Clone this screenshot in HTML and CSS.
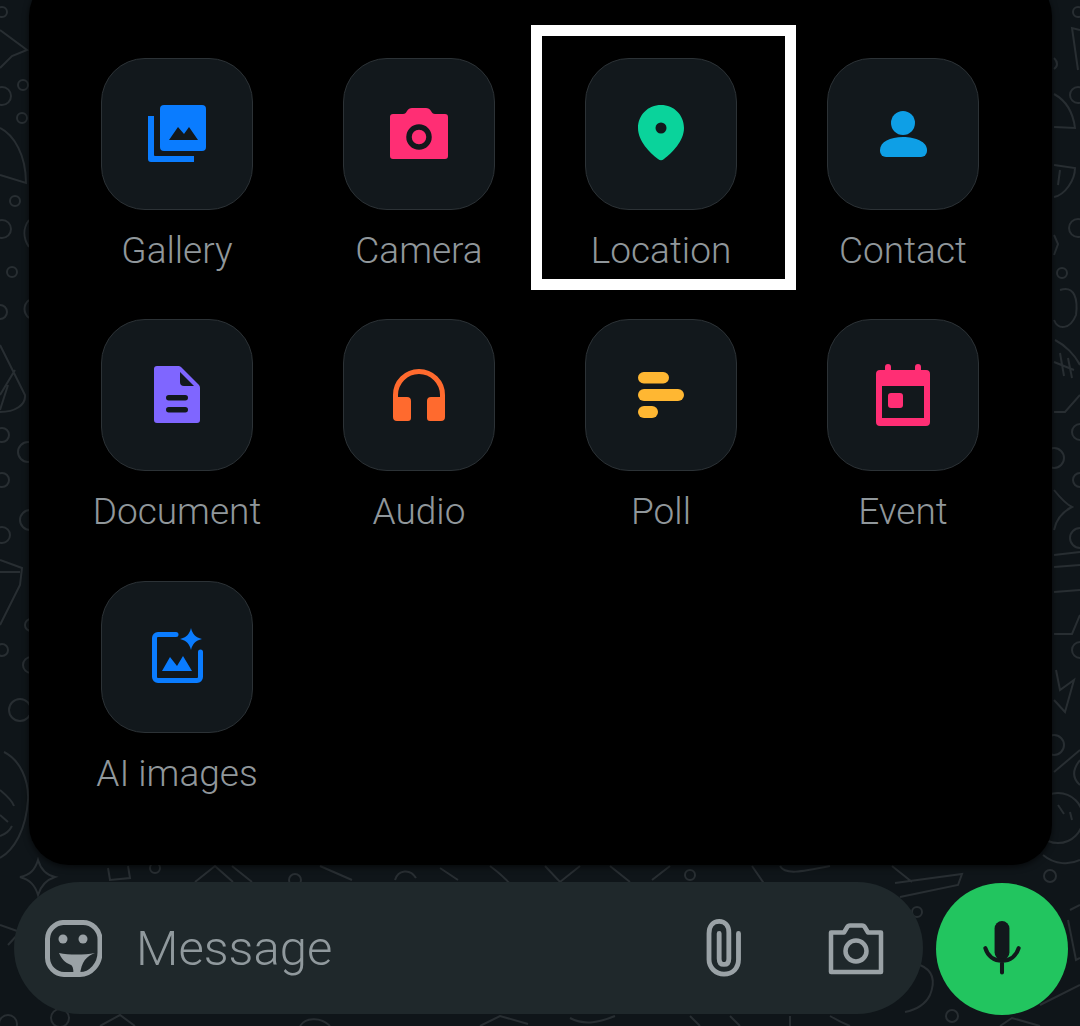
FILE: index.html
```html
<!DOCTYPE html>
<html lang="en">
<head>
  <meta charset="UTF-8">
  <title>Attach menu</title>
  <link rel="stylesheet" href="styles.css">
</head>
<body>
  <!-- wallpaper doodles -->
  <svg class="doodles" viewBox="0 0 1080 1026" width="1080" height="1026" fill="none" stroke="#282e32" stroke-width="2">
    <!-- left strip -->
    <circle cx="2" cy="12" r="5"/>
    <path d="M0 30L27 50 12 56 0 68"/>
    <circle cx="23" cy="85" r="5"/>
    <circle cx="2" cy="96" r="9"/>
    <circle cx="22" cy="118" r="5"/>
    <path d="M0 128C14 135 26 155 26 183L0 175"/>
    <circle cx="15" cy="201" r="5"/>
    <circle cx="2" cy="229" r="9"/>
    <path d="M29 220C23 228 23 238 29 247"/>
    <circle cx="12" cy="272" r="5"/>
    <circle cx="0" cy="312" r="7"/>
    <path d="M29 300C23 305 23 313 29 318"/>
    <path d="M0 345L25 395C26 405 15 412 0 412M0 395L15 370M0 410L8 385"/>
    <circle cx="2" cy="435" r="7"/>
    <circle cx="28" cy="452" r="10"/>
    <circle cx="2" cy="480" r="7"/>
    <circle cx="30" cy="520" r="10"/>
    <circle cx="2" cy="535" r="8"/>
    <path d="M0 560L22 568 20 585 0 625M0 572H20"/>
    <circle cx="31" cy="625" r="6"/>
    <circle cx="2" cy="650" r="6"/>
    <circle cx="31" cy="665" r="8"/>
    <circle cx="20" cy="710" r="11"/>
    <path d="M4 752C20 760 29 780 28 800 26 830 14 850 0 858"/>
    <path d="M0 790C6 795 12 800 14 806M0 815L8 822M0 836C6 834 10 830 12 826"/>
    <!-- band above the input -->
    <path d="M38 860C41 870 46 875 55 877 46 880 41 885 38 895 35 885 30 880 20 877 30 875 35 870 38 860Z"/>
    <path d="M108 868L110 880 130 878 128 866"/>
    <circle cx="155" cy="868" r="5"/>
    <path d="M195 882L215 866 233 882M232 866L252 882"/>
    <circle cx="295" cy="880" r="6"/>
    <path d="M320 866L352 880"/>
    <path d="M395 880C398 870 410 868 416 878M440 868L458 880"/>
    <path d="M490 866C498 872 505 878 510 884M545 866L560 882 580 866"/>
    <path d="M610 866L630 882M652 880L670 866"/>
    <circle cx="690" cy="875" r="5"/>
    <path d="M752 866L765 885M780 866C785 875 800 872 830 866"/>
    <path d="M892 866L912 882M895 883L962 874 958 885 900 897"/>
    <circle cx="1050" cy="876" r="6"/>
    <circle cx="917" cy="912" r="5"/>
    <path d="M920 965C932 970 936 980 930 995 925 1005 915 1010 905 1012"/>
    <!-- under the input -->
    <path d="M0 925L20 932 8 945"/>
    <circle cx="60" cy="1018" r="9"/>
    <circle cx="8" cy="1024" r="9"/>
    <path d="M100 1026L120 1015 135 1026M300 1026C305 1018 320 1016 330 1026M480 1026L500 1016 528 1024"/>
    <path d="M570 1018C585 1026 600 1022 615 1016M690 1016L700 1026M730 1016L740 1026M790 1016V1026M830 1016C840 1022 845 1024 850 1026"/>
    <circle cx="952" cy="1016" r="6"/>
    <path d="M1000 1026L1012 1018 1040 1026"/>
    <path d="M1070 910L1080 905M1068 920L1076 960 1080 958M1040 1005L1080 985"/>
    <!-- right strip -->
    <circle cx="1078" cy="12" r="5"/>
    <path d="M1080 30L1072 28 1078 70"/>
    <path d="M1054 58C1058 62 1058 66 1054 69"/>
    <circle cx="1078" cy="95" r="8"/>
    <path d="M1054 94C1065 100 1073 112 1075 128L1054 127"/>
    <path d="M1054 165L1075 168C1075 180 1065 195 1054 197M1060 170L1058 185"/>
    <circle cx="1078" cy="228" r="9"/>
    <path d="M1054 235L1058 244 1054 255"/>
    <circle cx="1062" cy="273" r="5"/>
    <path d="M1060 290C1075 285 1078 300 1076 315 1070 330 1058 330 1054 320"/>
    <path d="M1055 340C1065 345 1075 355 1080 365M1054 362L1074 370M1060 353L1064 376M1068 358L1072 378"/>
    <path d="M1080 395L1065 412H1054"/>
    <circle cx="1080" cy="432" r="8"/>
    <circle cx="1054" cy="458" r="10"/>
    <circle cx="1080" cy="480" r="7"/>
    <path d="M1054 490C1062 500 1068 505 1072 507 1062 512 1056 520 1054 530"/>
    <circle cx="1080" cy="538" r="10"/>
    <path d="M1054 555L1080 552M1054 567L1080 565M1054 592L1080 590"/>
    <path d="M1054 634H1072L1080 615"/>
    <circle cx="1080" cy="650" r="8"/>
    <path d="M1056 670L1060 690 1074 680 1065 712 1054 700"/>
    <circle cx="1054" cy="745" r="10"/>
    <path d="M1054 772L1080 750M1080 760C1072 770 1072 778 1080 785"/>
    <circle cx="1058" cy="818" r="25"/>
    <path d="M1058 805L1064 814M1070 812L1072 820"/>
    <path d="M1043 855C1055 865 1070 865 1080 860"/>
  </svg>

  <section class="panel">
    <div class="grid">
      <div class="item">
        <div class="tile">
          <svg class="ico" viewBox="0 0 60 60">
            <path fill="#0a7cff" d="M1 12h6v39a1 1 0 0 0 1 1h39v6H4a3 3 0 0 1-3-3z"/>
            <rect x="13" y="1" width="46" height="46" rx="4" fill="#0a7cff"/>
            <path fill="#12181c" d="M22 36l9-13 6 7 5-7 9 13z"/>
          </svg>
        </div>
        <span class="label">Gallery</span>
      </div>
      <div class="item">
        <div class="tile">
          <svg class="ico" viewBox="0 0 60 60">
            <path fill="#ff2e74" d="M4 10h10c2 0 3-1 4-3s3-3 5-3h14c2 0 4 1 5 3s2 3 4 3h10a3 3 0 0 1 3 3v39a3 3 0 0 1-3 3H4a3 3 0 0 1-3-3V13a3 3 0 0 1 3-3z"/>
            <circle cx="30" cy="33" r="10" fill="#ff2e74" stroke="#12181c" stroke-width="5.500"/>
          </svg>
        </div>
        <span class="label">Camera</span>
      </div>
      <div class="item item-marked">
        <div class="tile">
          <svg class="ico" viewBox="0 0 60 60">
            <path fill="#0ad39b" d="M30 1c13 0 23 10 23 23 0 13-12 25-20 31a4.500 4.500 0 0 1-6 0C19 49 7 37 7 24 7 11 17 1 30 1z"/>
            <circle cx="30" cy="24" r="5.500" fill="#12181c"/>
          </svg>
        </div>
        <span class="label">Location</span>
      </div>
      <div class="item">
        <div class="tile">
          <svg class="ico" viewBox="0 0 60 60">
            <circle cx="30" cy="19" r="12" fill="#0e9fe6"/>
            <path fill="#0e9fe6" d="M13 53a6 6 0 0 1-6-6v-1c0-8 10-13 23-13s24 5 24 13v1a6 6 0 0 1-6 6z"/>
          </svg>
        </div>
        <span class="label">Contact</span>
      </div>

      <div class="item">
        <div class="tile">
          <svg class="ico" viewBox="0 0 60 60">
            <path fill="#7f66ff" d="M10 1h21a4 4 0 0 1 3 1l18 18a4 4 0 0 1 1 3v32a3 3 0 0 1-3 3H10a3 3 0 0 1-3-3V4a3 3 0 0 1 3-3z"/>
            <path fill="#12181c" d="M33 7l14 14H37a4 4 0 0 1-4-4z"/>
            <rect x="19" y="30" width="22" height="5.500" rx="2.750" fill="#12181c"/>
            <rect x="19" y="42" width="22" height="5.500" rx="2.750" fill="#12181c"/>
          </svg>
        </div>
        <span class="label">Document</span>
      </div>
      <div class="item">
        <div class="tile">
          <svg class="ico" viewBox="0 0 60 60">
            <path fill="none" stroke="#ff6a2e" stroke-width="5" d="M6.500 38V30a23.500 23.500 0 0 1 47 0v8"/>
            <path fill="#ff6a2e" d="M8 32h10a4 4 0 0 1 4 4v17a3 3 0 0 1-3 3H8a4 4 0 0 1-4-4V36a4 4 0 0 1 4-4zM42 32h10a4 4 0 0 1 4 4v16a4 4 0 0 1-4 4H41a3 3 0 0 1-3-3V36a4 4 0 0 1 4-4z"/>
          </svg>
        </div>
        <span class="label">Audio</span>
      </div>
      <div class="item">
        <div class="tile">
          <svg class="ico" viewBox="0 0 60 60">
            <rect x="7" y="7" width="31" height="11.500" rx="5.750" fill="#ffb732"/>
            <rect x="7" y="24" width="46" height="12" rx="6" fill="#ffb732"/>
            <rect x="7" y="41" width="20" height="12" rx="6" fill="#ffb732"/>
          </svg>
        </div>
        <span class="label">Poll</span>
      </div>
      <div class="item">
        <div class="tile">
          <svg class="ico" viewBox="0 0 60 60">
            <path fill="#ff2e74" d="M12 2a3 3 0 0 1 6 0v3h24V2a3 3 0 0 1 6 0v3h5a4 4 0 0 1 4 4v48a4 4 0 0 1-4 4H7a4 4 0 0 1-4-4V9a4 4 0 0 1 4-4h5z"/>
            <rect x="9" y="21" width="42" height="32" fill="#12181c"/>
            <rect x="15" y="28" width="15" height="15" rx="3" fill="#ff2e74"/>
          </svg>
        </div>
        <span class="label">Event</span>
      </div>

      <div class="item">
        <div class="tile">
          <svg class="ico" viewBox="0 0 60 60">
            <path fill="none" stroke="#0a7cff" stroke-width="5" stroke-linecap="round" d="M29 7.500H11a3.500 3.500 0 0 0-3.500 3.500v39a3.500 3.500 0 0 0 3.500 3.500h39a3.500 3.500 0 0 0 3.500-3.500V25"/>
            <path fill="#0a7cff" d="M15 44l8-14 7 9 6-10 9 15z"/>
            <path fill="#0a7cff" d="M44 1c1.500 6 4.500 9.500 11 11-6.500 1.500-9.500 5-11 11-1.500-6-4.500-9.500-11-11 6.500-1.500 9.500-5 11-11z"/>
          </svg>
        </div>
        <span class="label">AI images</span>
      </div>
    </div>
  </section>

  <footer class="composer">
    <div class="inputbar">
      <svg class="bar-ico" viewBox="0 0 58 58" fill="none" stroke="#9aa2a6" stroke-width="5">
        <path d="M19 3.500h20a17 17 0 0 1 17 17v13C56 45 47 55.500 36 55.500H20A17 17 0 0 1 3.500 39V20A17 17 0 0 1 19 3.500z"/>
        <circle cx="19" cy="20" r="4.500" fill="#9aa2a6" stroke="none"/>
        <circle cx="39" cy="20" r="4.500" fill="#9aa2a6" stroke="none"/>
        <path fill="#9aa2a6" stroke="none" d="M15 34C25 36 40 36 51 34 43 37 37 42 36 57H29C30 52 29 47 27 46 21 44 17 39 15 34z"/>
      </svg>
      <span class="placeholder">Message</span>
      <svg class="bar-ico clip" viewBox="0 0 38 60" fill="none" stroke="#9aa2a6" stroke-width="5" stroke-linecap="round">
        <path d="M34 15v27c0 9-6 15-15 15S3.500 50 3.500 42V15C3.500 7 8 2.500 14 2.500S24 7 24 14v27c0 4-2 6-5 6s-5-2-5-6V15"/>
      </svg>
      <svg class="bar-ico cam" viewBox="0 0 58 58" fill="none" stroke="#9aa2a6" stroke-width="4.500">
        <path stroke-linejoin="round" d="M4 13.500h13l3-5c.5-1 1.500-2 3-2h12c1.500 0 2.500 1 3 2l3 5h13v39.500H4z"/>
        <circle cx="29" cy="32" r="10.500"/>
      </svg>
    </div>
    <div class="mic">
      <svg class="mic-ico" viewBox="0 0 44 60" fill="none">
        <rect x="13.750" y="-1" width="16.500" height="43" rx="8.250" fill="#12181c"/>
        <path stroke="#12181c" stroke-width="4.500" stroke-linecap="round" d="M3.500 29c2.500 8.500 9.500 14 18.500 14s16-5.500 18.500-14M22 43v13"/>
      </svg>
    </div>
  </footer>
</body>
</html>
```

FILE: styles.css
```css
*, *::before {
  box-sizing: border-box;
}
html, body {
  margin: 0;
  height: 1026px;
  overflow: hidden;
}
body {
  position: relative;
  background-color: #0f1519;
  font-family: Roboto, "Noto Sans", sans-serif;
}
.doodles {
  position: absolute;
  top: 0;
  left: 0;
}
.panel {
  position: relative;
  height: 889px;
  margin: -24px 28px 0 29px;
  padding: 82px 0 0 0;
  background-color: #000;
  border-radius: 40px;
  box-shadow: 0 2px 6px rgba(0, 0, 0, 0.6);
}
.grid {
  display: grid;
  grid-template-columns: repeat(4, 242px);
  grid-auto-rows: 261.4px;
  margin-left: 27px;
}
.item {
  position: relative;
  display: flex;
  flex-direction: column;
  align-items: center;
}
.item-marked::before {
  content: "";
  position: absolute;
  top: -33px;
  left: -9px;
  width: 265px;
  height: 265px;
  border: 11px solid #fff;
}
.tile {
  display: flex;
  align-items: center;
  justify-content: center;
  width: 152px;
  height: 152px;
  background-color: #12181c;
  border: 1.5px solid #2c3236;
  border-radius: 44px;
}
.ico {
  width: 60px;
  height: 60px;
  overflow: visible;
}
.label {
  margin-top: 17px;
  color: #90979b;
  font-size: 37px;
  font-weight: 300;
  line-height: 48px;
  white-space: nowrap;
}
.composer {
  position: relative;
  display: flex;
  align-items: flex-start;
  padding: 17px 12px 0 14px;
}
.inputbar {
  display: flex;
  align-items: center;
  width: 909px;
  height: 132px;
  padding: 0 38px 0 30px;
  background-color: #1f282b;
  border-radius: 66px;
}
.bar-ico {
  width: 58px;
  height: 58px;
  flex-shrink: 0;
}
.placeholder {
  flex: 1;
  margin-left: 34px;
  color: #90999d;
  font-size: 49px;
  font-weight: 300;
}
.clip {
  width: 38px;
}
.cam {
  margin-left: 84px;
}
.mic {
  display: flex;
  align-items: center;
  justify-content: center;
  width: 132px;
  height: 132px;
  margin: 1px 0 0 13px;
  background-color: #22c55f;
  border-radius: 50%;
}
.mic-ico {
  width: 40px;
  height: 54px;
  overflow: visible;
}
```
